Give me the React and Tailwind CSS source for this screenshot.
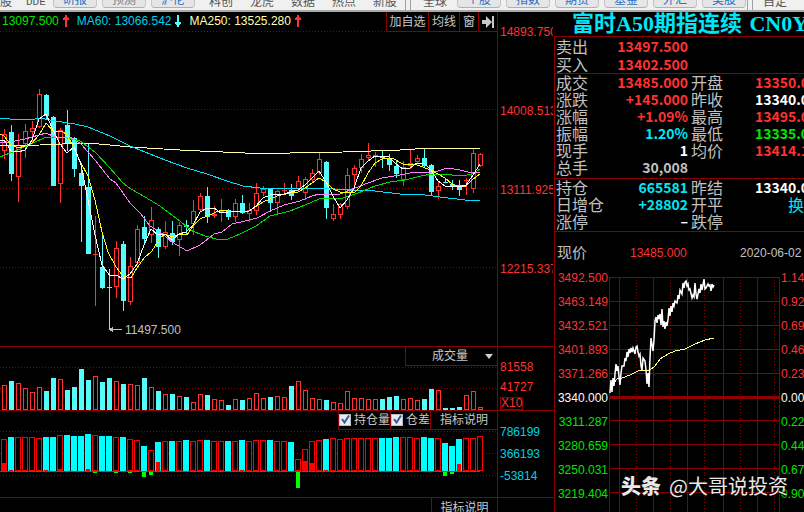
import React from "react";

const UP = "#ff3232";
const DOWN = "#54fcfc";
const GRID = "#8c0000";

// [direction, high, body top, body bottom, low, volume top, open interest top]
const candles = [
  ["u", 129, 134, 151, 159, 385, 439],
  ["d", 125, 132, 174, 181, 381, 437],
  ["u", 134, 145, 177, 202, 383, 437],
  ["u", 124, 131, 144, 158, 388, 437],
  ["u", 121, 128, 132, 143, 392, 437],
  ["u", 89, 94, 127, 128, 387, 438],
  ["d", 94, 95, 116, 119, 391, 437],
  ["d", 116, 117, 186, 186, 378, 437],
  ["u", 128, 130, 184, 203, 379, 435],
  ["d", 110, 125, 143, 151, 390, 435],
  ["d", 137, 138, 169, 177, 387, 436],
  ["d", 164, 173, 186, 242, 369, 436],
  ["d", 143, 187, 254, 254, 380, 434],
  ["u", 216, 254, 255, 306, 376, 435],
  ["d", 232, 267, 288, 289, 382, 436],
  ["d", 269, 287, 288, 329, 378, 436],
  ["u", 241, 248, 287, 298, 381, 437],
  ["d", 241, 244, 301, 311, 384, 437],
  ["u", 257, 266, 302, 305, 384, 439],
  ["u", 225, 229, 263, 265, 385, 440],
  ["d", 216, 227, 239, 243, 378, 446],
  ["u", 207, 220, 235, 243, 387, 450],
  ["d", 227, 229, 247, 258, 391, 442],
  ["u", 221, 232, 247, 249, 394, 441],
  ["d", 221, 233, 242, 245, 394, 441],
  ["u", 222, 225, 240, 256, 396, 441],
  ["d", 220, 225, 227, 235, 397, 440],
  ["u", 200, 211, 224, 235, 402, 441],
  ["u", 193, 196, 210, 211, 394, 440],
  ["d", 187, 196, 217, 223, 395, 440],
  ["u", 206, 214, 216, 218, 399, 441],
  ["u", 199, 211, 213, 222, 400, 441],
  ["d", 209, 210, 217, 220, 405, 441],
  ["u", 199, 203, 217, 222, 399, 441],
  ["d", 195, 203, 213, 214, 400, 440],
  ["u", 203, 210, 214, 222, 398, 441],
  ["u", 183, 193, 211, 215, 393, 440],
  ["u", 186, 189, 193, 196, 398, 440],
  ["d", 188, 189, 203, 212, 397, 440],
  ["u", 190, 191, 203, 215, 396, 441],
  ["u", 183, 190, 191, 195, 397, 441],
  ["d", 184, 190, 196, 200, 386, 442],
  ["u", 176, 181, 189, 192, 381, 459],
  ["u", 177, 179, 193, 200, 390, 449],
  ["u", 169, 173, 180, 183, 398, 441],
  ["u", 153, 159, 173, 175, 399, 440],
  ["d", 161, 162, 208, 219, 400, 439],
  ["u", 204, 214, 219, 221, 402, 438],
  ["u", 203, 204, 215, 219, 403, 439],
  ["u", 168, 175, 207, 209, 391, 438],
  ["u", 165, 168, 175, 188, 398, 438],
  ["u", 154, 159, 168, 173, 398, 438],
  ["u", 143, 155, 158, 160, 399, 438],
  ["u", 152, 155, 156, 167, 399, 438],
  ["d", 150, 157, 158, 168, 399, 438],
  ["d", 154, 159, 165, 171, 397, 438],
  ["d", 160, 166, 174, 178, 396, 437],
  ["u", 161, 167, 180, 186, 399, 437],
  ["u", 150, 163, 166, 169, 398, 437],
  ["u", 155, 158, 162, 164, 400, 438],
  ["d", 149, 158, 166, 167, 399, 437],
  ["d", 164, 165, 192, 195, 389, 438],
  ["u", 181, 186, 191, 199, 390, 438],
  ["d", 179, 182, 183, 183, 408, 443],
  ["d", 180, 184, 187, 190, 408, 446],
  ["d", 180, 185, 190, 196, 407, 439],
  ["u", 178, 180, 181, 195, 395, 438],
  ["u", 149, 153, 189, 193, 391, 438],
  ["u", 153, 154, 166, 167, 407, 436],
];

// candle index -> change of open interest, in pixels
const interestDiff = [
  [0, 8], [1, 1], [6, 1], [8, 2], [12, 2], [22, 9], [34, 1], [43, 10],
  [44, 8], [46, 1], [65, 7], [13, -1], [16, -1], [18, -1], [20, -5],
  [21, -3], [42, -16], [63, -4], [64, -2],
];

const averages = [
  {
    color: "#ffffa8",
    points:
      "0,146 40,145 62,144 88,143 110,145 130,147 180,150 200,151 245,153 290,153 343,152 400,150 430,148 480,148",
  },
  {
    color: "#00e0f8",
    points:
      "0,118 10,119 35,119 40,118 55,121 75,124 88,127 110,136 130,146 145,152 165,160 187,168 207,174 227,181 243,186 260,188 320,188 350,190 375,191 400,194 425,195 440,197 465,200 480,200",
  },
  {
    color: "#00dc00",
    points:
      "0,157 10,153 20,149 33,143 46,137 67,138 80,141 95,152 110,168 123,183 131,189 145,197 160,206 180,221 190,230 205,236 220,240 228,239 240,234 256,226 270,216 290,211 305,205 319,199 343,198 358,193 375,186 390,182 405,180 417,177 430,174 452,175 462,176 472,174 480,169",
  },
  {
    color: "#ff80ff",
    points:
      "0,143 10,142 25,139 46,133 55,137 70,137 81,144 95,160 110,179 116,183 130,203 140,213 150,226 160,232 172,242 187,251 200,245 214,234 222,232 232,224 245,221 257,218 270,211 284,205 300,201 312,196 319,194 340,194 350,190 368,183 382,178 400,175 415,172 435,172 447,168 460,170 472,173 480,172",
  },
  {
    color: "#ffff00",
    points:
      "0,134 4,136 11,145 18,148 25,146 32,143 39,135 46,123 53,131 62,131 67,135 74,148 81,163 88,176 95,200 102,232 108,252 116,267 123,276 131,278 137,268 144,258 152,251 160,238 165,234 172,237 179,234 187,235 193,226 200,219 207,216 221,210 235,212 249,211 263,202 277,196 290,193 298,192 305,188 312,183 319,178 326,182 333,189 340,192 354,193 361,186 368,173 375,163 382,159 392,158 403,164 417,165 431,170 445,178 452,184 459,187 466,186 473,179 480,174",
  },
  {
    color: "#ffffff",
    points:
      "0,141 4,140 11,151 18,152 25,150 32,140 39,119 46,114 53,130 60,144 67,153 74,147 78,157 81,165 88,200 95,235 102,265 110,276 116,275 123,279 130,274 137,264 144,245 151,229 158,235 165,234 172,240 179,234 186,232 193,225 200,212 207,208 214,208 221,213 235,211 249,211 256,206 263,198 270,195 284,194 291,192 298,190 305,185 312,178 319,171 326,182 333,196 340,208 347,200 354,188 361,168 368,161 375,156 389,157 396,164 403,169 410,168 417,163 424,163 431,170 438,181 445,186 459,187 466,185 473,175 480,164",
  },
];

const intraday =
  "610,393 611,380 612,392 613,378 614,386 615,374 616,364 617,371 618,366 619,377 620,385 621,373 622,366 624,366 625,358 626,361 627,352 628,357 629,349 630,353 631,348 632,352 633,348 635,354 636,347 637,346 638,352 639,356 640,354 641,366 642,370 643,358 645,361 646,370 647,384 648,373 649,387 650,358 651,338 653,351 654,340 655,321 656,317 657,323 658,315 659,319 660,314 661,325 662,309 663,327 664,321 665,329 666,322 667,326 668,320 669,308 670,316 671,306 672,312 673,303 674,306 675,301 677,303 678,295 679,299 680,290 682,294 683,283 684,288 685,282 686,281 687,286 688,284 689,290 690,289 692,298 693,295 694,297 695,283 696,294 697,299 699,289 700,293 701,284 702,290 703,285 704,279 705,289 706,288 708,284 709,286 710,285 711,291 712,284 713,287 714,285";

const intradayAverage =
  "610,390 613,384 617,379 622,378 630,375 640,370 650,370 655,366 660,359 668,354 675,351 685,349 695,344 705,340 714,338";

const RED = "text-[#ff3232]";
const CYAN = "text-[#00e6f6]";
const GREEN = "text-[#00e600]";
const WHITE = "text-white";
const GRAY = "text-[#c0c0c0]";

const quoteGroups = [
  [
    ["卖出", "13497.500", RED],
    ["买入", "13402.500", RED],
  ],
  [
    ["成交", "13485.000", RED, "开盘", "13350.0", RED],
    ["涨跌", "+145.000", RED, "昨收", "13340.0", WHITE],
    ["涨幅", "+1.09%", RED, "最高", "13495.0", RED],
    ["振幅", "1.20%", CYAN, "最低", "13335.0", GREEN],
    ["现手", "1", WHITE, "均价", "13414.1", RED],
    ["总手", "30,008", GRAY],
  ],
  [
    ["持仓", "665581", CYAN, "昨结", "13340.0", WHITE],
    ["日增仓", "+28802", CYAN, "开平", "换", CYAN],
    ["涨停", "–", WHITE, "跌停", "", WHITE],
  ],
];

const intradayScale = [
  ["3492.500", "1.14", RED],
  ["3463.149", "0.92", RED],
  ["3432.521", "0.69", RED],
  ["3401.893", "0.46", RED],
  ["3371.266", "0.23", RED],
  ["3340.000", "0.00", WHITE],
  ["3311.287", "0.22", GREEN],
  ["3280.659", "0.44", GREEN],
  ["3250.031", "0.67", GREEN],
  ["3219.404", "0.90", GREEN],
];

const centerX = (i) => 4 + i * 7;

const DottedLine = ({ y }) => (
  <path d={`M0 ${y + 0.5}H497`} stroke={GRID} strokeDasharray="1 2" />
);

const Bar = ({ dir, x, top, bottom, upColor, downColor, width = 5 }) => {
  const left = x - Math.floor(width / 2);
  if (bottom - top <= 1) {
    return (
      <rect
        x={left}
        y={top}
        width={width}
        height={1}
        fill={dir === "u" ? upColor : downColor}
      />
    );
  }
  if (dir === "d") {
    return (
      <rect
        x={left}
        y={top}
        width={width}
        height={bottom - top}
        fill={downColor}
      />
    );
  }
  return (
    <rect
      x={left + 0.5}
      y={top + 0.5}
      width={width - 1}
      height={bottom - top - 1}
      fill="#000"
      stroke={upColor}
    />
  );
};

const Chart = ({ top, height, className, label, children }) => (
  <svg
    viewBox={`0 ${top} 497 ${height}`}
    preserveAspectRatio="none"
    shapeRendering="crispEdges"
    fill="none"
    role="img"
    aria-label={label}
    className={`block w-full overflow-visible ${className}`}
  >
    {children}
  </svg>
);

const Arrow = ({ down, className }) => (
  <svg
    viewBox="0 0 6 12"
    className={`w-1.5 h-3 shrink-0 ${down ? "rotate-180" : ""} ${className}`}
    fill="currentColor"
    shapeRendering="crispEdges"
  >
    <path d="M2 0h2v2h1v1h1v2H4v7H2V5H0V3h1V2h1z" />
  </svg>
);

const TextItem = ({ children, className = "" }) => (
  <a href="#" className={`h-4 leading-4 text-[#555] shrink-0 ${className}`}>
    {children}
  </a>
);

const ToolButton = ({ muted, children }) => (
  <button
    className={`flex items-end justify-center w-11 h-5 mb-0.5 leading-[14px] shrink-0 rounded-sm border border-[#c4c4c4] border-b-[#b0b0b0] bg-[#e6e6e6] ${
      muted ? "text-[#777]" : "text-[#2a6fc4]"
    }`}
  >
    {children}
  </button>
);

const Separator = () => (
  <span className="w-px h-2.5 bg-[#a0a0a0] shrink-0 self-start" />
);

const Toolbar = () => (
  <nav className="flex items-end h-3 overflow-hidden bg-[#f0f0f0] border-b-2 border-[#a8a8a8] text-[12px] whitespace-nowrap">
    <div className="flex w-[53px] shrink-0 gap-3.5">
      <TextItem>股</TextItem>
      <TextItem className="font-['Liberation_Mono',monospace] text-[11px]">
        DDE
      </TextItem>
    </div>
    <div className="flex gap-[5px]">
      <ToolButton>研报</ToolButton>
      <ToolButton muted>预测</ToolButton>
      <ToolButton>沪伦</ToolButton>
    </div>
    <div className="flex ml-3.5 gap-[17px]">
      {["科创", "龙虎", "数据", "热点", "新股"].map((name) => (
        <TextItem key={name}>{name}</TextItem>
      ))}
    </div>
    <div className="flex ml-2 mr-3 gap-1 self-start">
      <Separator />
      <Separator />
    </div>
    <TextItem>全球</TextItem>
    <div className="flex ml-2.5 gap-[5px]">
      {["个股", "指数", "期货", "基金", "外汇", "美股"].map((name) => (
        <ToolButton key={name}>{name}</ToolButton>
      ))}
    </div>
    <div className="flex ml-px mr-2.5 gap-1 self-start">
      <Separator />
      <Separator />
    </div>
    <TextItem>自定</TextItem>
  </nav>
);

const PriceHeader = () => (
  <div className="flex justify-between h-5">
    <div className="flex items-center h-[18px] pl-0.5 text-[12px] whitespace-nowrap">
      <span className={GREEN}>13097.500</span>
      <Arrow className="ml-1 mr-2 text-[#ff3232]" />
      <span className="text-[#00d0e8]">MA60: 13066.542</span>
      <Arrow down className="ml-1 mr-2 text-[#54fcfc]" />
      <span className="text-[#ffffb0]">MA250: 13525.280</span>
      <Arrow className="ml-1 text-[#ff3232]" />
    </div>
    <div className="relative flex border-l border-b border-[#8c0000] bg-black text-[12px] text-[#c8c8c8] divide-x divide-[#8c0000]">
      <button className="w-[42px]">加自选</button>
      <button className="w-[31px]">均线</button>
      <button className="w-[19px]">窗</button>
      <button
        className="w-[18px] flex items-center justify-center"
        aria-label="展开"
      >
        <svg viewBox="0 0 12 12" className="w-3 h-3" fill="currentColor">
          <path d="M0 4h4V0l6 6-6 6V8H0zM10 0h2v12h-2z" />
        </svg>
      </button>
    </div>
  </div>
);

const PriceChart = () => (
  <div className="relative">
    <Chart top={32} height={314} className="h-[314px]" label="K线图">
      {[31, 109, 188, 267].map((y) => (
        <DottedLine key={y} y={y} />
      ))}
      {candles.map(([dir, high, top, bottom, low], i) => (
        <g key={i}>
          <rect
            x={centerX(i)}
            y={high}
            width={1}
            height={low - high}
            fill={dir === "u" ? UP : DOWN}
          />
          <Bar
            dir={dir}
            x={centerX(i)}
            top={top}
            bottom={bottom}
            upColor={UP}
            downColor={DOWN}
          />
        </g>
      ))}
      {averages.map((line) => (
        <polyline key={line.color} points={line.points} stroke={line.color} />
      ))}
      <path d="M110 329.500H122" stroke="#c0c0c0" />
      <path d="M109 329.500l4 -3v6z" fill="#c0c0c0" />
    </Chart>
    <span className="absolute left-[125px] top-[290px] leading-4 text-[12px] text-[#c0c0c0]">
      11497.500
    </span>
  </div>
);

const VolumePane = () => (
  <div>
    <div className="flex justify-end">
      <div className="relative w-[92px] h-[19px] border-l border-b border-[#8c0000]">
        <select
          aria-label="指标"
          className="appearance-none block w-full h-[18px] pl-[26px] bg-transparent text-[12px] text-[#c8c8c8] outline-none"
        >
          <option>成交量</option>
        </select>
        <svg
          viewBox="0 0 8 5"
          className="absolute right-1 top-[7px] w-2 h-[5px] pointer-events-none"
          fill="#d0d0d0"
        >
          <path d="M0 0h8L4 5z" />
        </svg>
      </div>
    </div>
    <Chart top={366} height={44} className="h-11" label="成交量">
      <DottedLine y={367} />
      <DottedLine y={388} />
      {candles.map(([dir, , , , , volume], i) => (
        <Bar
          key={i}
          dir={dir}
          x={centerX(i)}
          top={volume}
          bottom={410}
          upColor={UP}
          downColor={DOWN}
        />
      ))}
    </Chart>
  </div>
);

const CheckLabel = ({ children, className }) => (
  <label className={`flex items-center gap-[3px] ${className}`}>
    <span className="relative flex">
      <input
        type="checkbox"
        defaultChecked
        className="appearance-none w-3 h-3 bg-[#e8ecf2] border border-[#b8bcc4]"
      />
      <svg
        viewBox="0 0 12 12"
        className="absolute inset-0 w-3 h-3 pointer-events-none"
        fill="none"
        stroke="#3c5a96"
        strokeWidth="2"
      >
        <path d="M3 5l2.500 3.500L10 1.500" />
      </svg>
    </span>
    {children}
  </label>
);

const InterestPane = () => (
  <div>
    <div className="flex justify-end">
      <div className="flex h-[19px] border-l border-b border-[#8c0000] divide-x divide-[#8c0000] text-[12px] text-[#c8c8c8] whitespace-nowrap">
        <CheckLabel className="w-[52px]">持仓量</CheckLabel>
        <CheckLabel className="w-10">仓差</CheckLabel>
        <button className="w-[66px]">指标说明</button>
      </div>
    </div>
    <Chart top={430} height={67} className="h-[67px]" label="持仓量">
      {[431, 453, 475].map((y) => (
        <DottedLine key={y} y={y} />
      ))}
      {candles.map(([dir, , , , , , interest], i) => (
        <Bar
          key={i}
          dir={dir}
          x={centerX(i)}
          top={interest}
          bottom={471}
          upColor="#ff0000"
          downColor="#00ffff"
          width={6}
        />
      ))}
      {interestDiff.map(([i, diff]) => (
        <rect
          key={i}
          x={centerX(i) - 2}
          y={diff > 0 ? 471 - diff : 472}
          width={4}
          height={Math.abs(diff)}
          fill={diff > 0 ? "#ff0000" : "#00ff00"}
        />
      ))}
      <path d="M0 471.500H480" stroke="#008060" />
    </Chart>
  </div>
);

const Pane = ({ children, axis, className = "" }) => (
  <section className={`flex ${className}`}>
    <div className="flex-1 min-w-0 border-r border-[#8c0000]">{children}</div>
    <div className="w-14 shrink-0 pl-0.5 pr-px text-[12px]">
      <div className="overflow-hidden">{axis}</div>
    </div>
  </section>
);

const ChartColumn = () => (
  <div className="flex flex-col flex-1 min-w-0">
    <Pane
      axis={["14893.750", "14008.513", "13111.925", "12215.337"].map((v) => (
        <div key={v} className="h-[79px] pt-3 leading-4 text-[#ff3232]">
          {v}
        </div>
      ))}
    >
      <PriceHeader />
      <PriceChart />
    </Pane>
    <Pane
      className="border-t border-[#8c0000]"
      axis={
        <div className="pt-2.5 leading-5 text-[#ff3232]">
          <div>81558</div>
          <div>41727</div>
          <div className="w-fit h-[13px] leading-[11px] border border-[#8c0000]">
            X10
          </div>
        </div>
      }
    >
      <VolumePane />
    </Pane>
    <Pane
      className="border-t border-[#8c0000]"
      axis={
        <div className="pt-2.5 leading-[22px] text-[#00d0e8]">
          <div>786199</div>
          <div>366193</div>
          <div>-53814</div>
        </div>
      }
    >
      <InterestPane />
    </Pane>
    <Pane className="border-t border-[#8c0000] flex-1">
      <div className="flex justify-end h-3.5 overflow-hidden">
        <button className="w-[66px] h-5 border-l border-[#8c0000] text-[12px] text-[#c8c8c8]">
          指标说明
        </button>
      </div>
    </Pane>
  </div>
);

const QuoteRow = ({ row, tall }) => {
  const [label, value, color, label2, value2, color2] = row;
  return (
    <div className={`flex ${tall ? "h-[18px]" : "h-[17px]"} items-center`}>
      <dt className="w-[52px] shrink-0 text-[16px] text-[#c0c0c0]">{label}</dt>
      <dd className={`w-20 shrink-0 text-right text-[14px] font-bold ${color}`}>
        {value}
      </dd>
      {label2 && (
        <>
          <dt className="w-16 ml-[3px] shrink-0 text-[16px] text-[#c0c0c0]">
            {label2}
          </dt>
          <dd
            className={`flex-1 ${
              value2.length === 1
                ? "text-right text-[16px]"
                : "text-[14px] font-bold"
            } ${color2}`}
          >
            {value2}
          </dd>
        </>
      )}
    </div>
  );
};

const IntradayChart = () => (
  <div className="flex flex-1 text-[12px]">
    <div className="w-[54px] pr-px text-right leading-6">
      {intradayScale.map(([price, , color]) => (
        <div key={price} className={color}>
          {price}
        </div>
      ))}
    </div>
    <svg
      viewBox="609 266 171 246"
      className="flex-1 min-w-0 h-[246px]"
      preserveAspectRatio="none"
      fill="none"
      role="img"
      aria-label="分时图"
    >
      <g stroke={GRID} shapeRendering="crispEdges">
        {[277, 301, 325, 349, 373, 420, 444, 468, 492].map((y) => (
          <path key={y} d={`M609 ${y + 0.5}H780`} />
        ))}
        {[609, 619, 653, 687, 723, 757, 779].map((x) => (
          <path key={x} d={`M${x + 0.5} 277V512`} />
        ))}
        {[636, 670, 704, 740, 774].map((x) => (
          <path key={x} d={`M${x + 0.5} 277V512`} strokeDasharray="1 2" />
        ))}
        <path d="M609 397.500H780" strokeWidth="3" />
      </g>
      <polyline
        points={intradayAverage}
        stroke="#ffff80"
        shapeRendering="crispEdges"
      />
      <polyline points={intraday} stroke="#fff" strokeWidth="1.500" />
    </svg>
    <div className="w-6 pl-px leading-6 overflow-hidden">
      {intradayScale.map(([price, percent, color]) => (
        <div key={price} className={color}>
          {percent}
        </div>
      ))}
    </div>
  </div>
);

const QuotePanel = () => (
  <aside className="flex flex-col w-[250px] shrink-0 overflow-hidden whitespace-nowrap">
    <h1 className="h-6 pl-[18px] leading-6 text-[22px] font-bold text-[#00e6f6] font-['Liberation_Serif','Noto_Sans_CJK_SC',serif]">
      富时A50期指连续 <span className="ml-0.5">CN0Y</span>
    </h1>
    <div className="flex flex-col flex-1 border-l border-t border-[#8c0000]">
      {quoteGroups.map((group, i) => (
        <dl
          key={i}
          className={`pl-px border-b border-[#8c0000] leading-[17px] font-['Noto_Sans_CJK_SC',sans-serif] ${
            i === 0 ? "" : i === 1 ? "pb-0.5" : "pb-px"
          }`}
        >
          {group.map((row) => (
            <QuoteRow key={row[0]} row={row} tall={i === 0} />
          ))}
        </dl>
      ))}
      <div className="flex items-center h-[34px] pt-2 pl-0.5 text-[12px]">
        <span className="w-[73px] text-[15px] text-[#c0c0c0]">现价</span>
        <span className="w-[110px] text-[#ff3232]">13485.000</span>
        <span className="text-[#c0c0c0]">2020-06-02</span>
      </div>
      <IntradayChart />
    </div>
  </aside>
);

export default function App() {
  return (
    <div className="relative flex flex-col min-h-screen overflow-hidden bg-black font-['Liberation_Sans','Noto_Sans_CJK_SC',sans-serif]">
      <Toolbar />
      <main className="flex flex-1">
        <ChartColumn />
        <QuotePanel />
      </main>
      <div className="absolute right-4 bottom-3 flex items-center gap-2 leading-7 text-xl text-[#e8e8e8] font-['Noto_Sans_CJK_SC',sans-serif] [text-shadow:1px_1px_2px_#000]">
        <b className="font-black">头条</b>
        <span>@大哥说投资</span>
      </div>
    </div>
  );
}
